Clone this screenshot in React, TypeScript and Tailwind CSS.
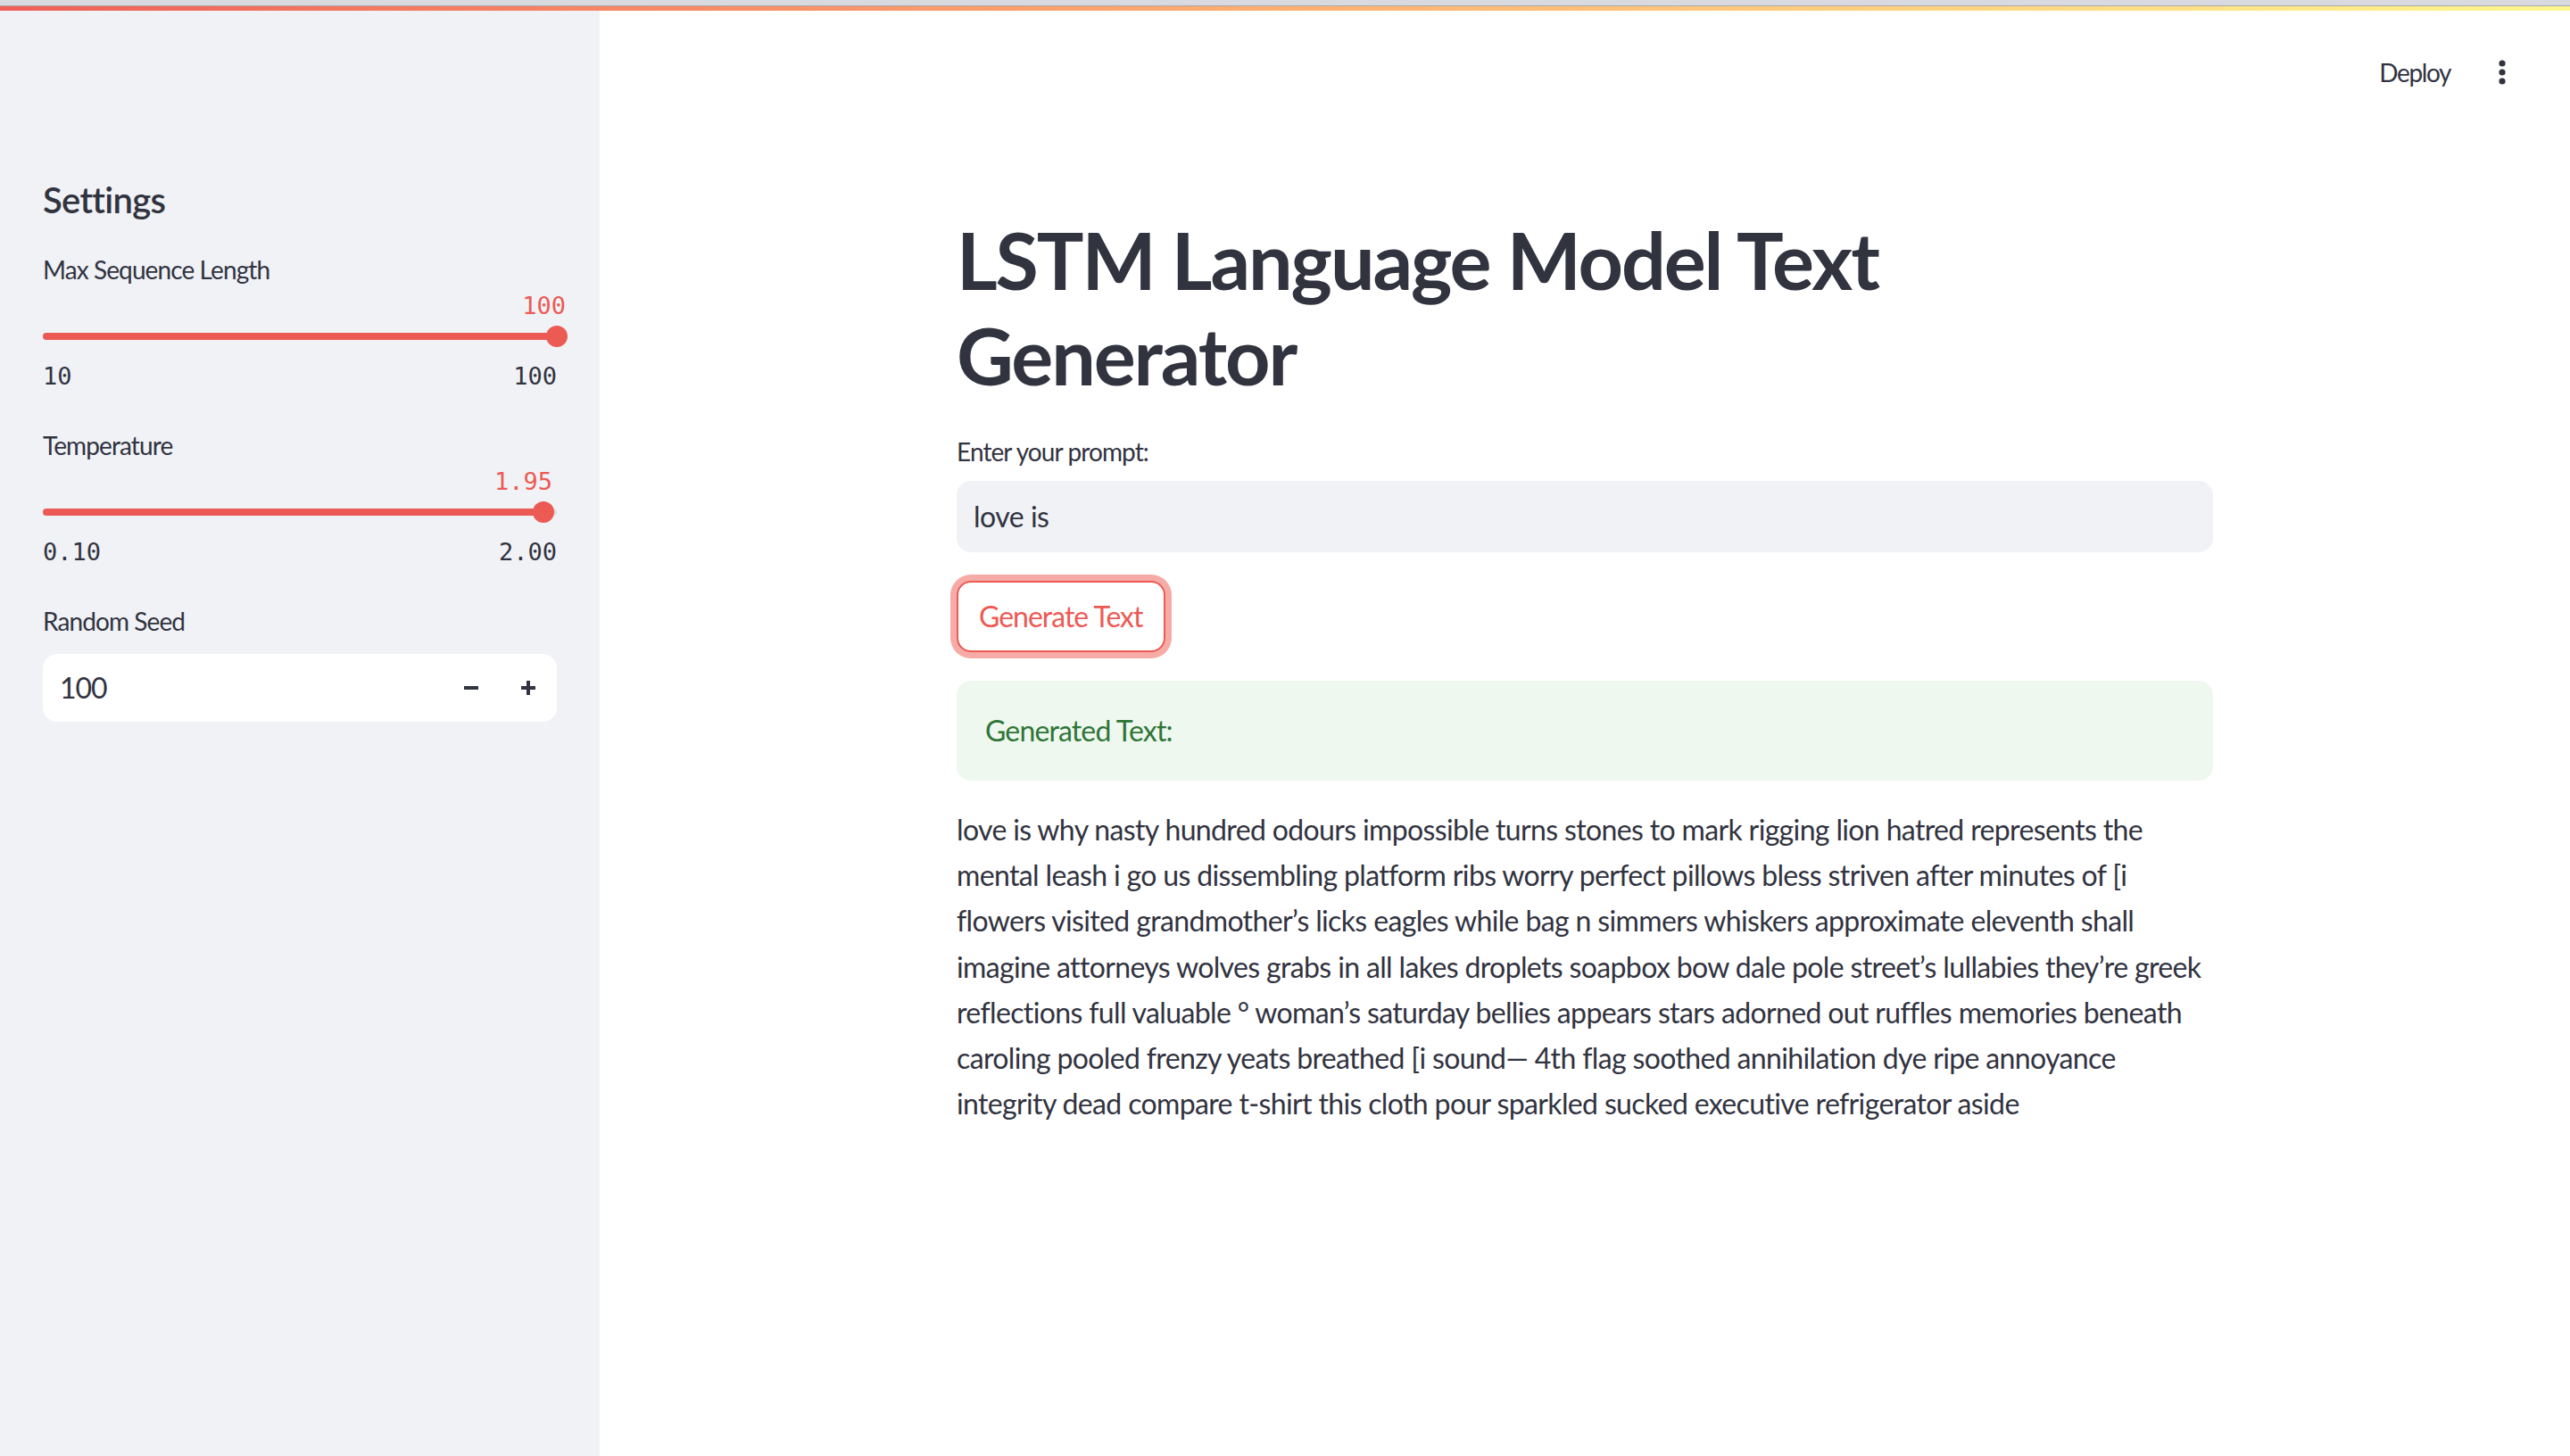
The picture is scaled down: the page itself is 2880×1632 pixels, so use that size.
import React from "react";

const generated = [
  "love is why nasty hundred odours impossible turns stones to mark rigging lion hatred represents the",
  "mental leash i go us dissembling platform ribs worry perfect pillows bless striven after minutes of [i",
  "flowers visited grandmother’s licks eagles while bag n simmers whiskers approximate eleventh shall",
  "imagine attorneys wolves grabs in all lakes droplets soapbox bow dale pole street’s lullabies they’re greek",
  "reflections full valuable ° woman’s saturday bellies appears stars adorned out ruffles memories beneath",
  "caroling pooled frenzy yeats breathed [i sound— 4th flag soothed annihilation dye ripe annoyance",
  "integrity dead compare t-shirt this cloth pour sparkled sucked executive refrigerator aside",
];

const TRACK_W = 576;

function Slider({ label, value, min, max, pct }: { label: string; value: string; min: string; max: string; pct: number }) {
  const x = pct * TRACK_W;
  return (
    <div className="flex flex-col">
      <div className="h-[40px] text-[28px] leading-[40px] tracking-[-0.9px]">{label}</div>
      <div className="relative h-[84px]">
        <span
          className="absolute top-[5px] font-['DejaVu_Sans_Mono',monospace] text-[27px] leading-[32px] text-[#ec5a54]"
          style={{ right: TRACK_W - x - 10 }}
        >
          {value}
        </span>
        <div className="absolute left-0 right-0 top-[51px] h-[8px] rounded-full bg-[#dcdee3]" />
        <div className="absolute left-0 top-[51px] h-[8px] rounded-full bg-[#ec5a54]" style={{ width: x }} />
        <div className="absolute top-[43px] h-[24px] w-[24px] rounded-full bg-[#ec5a54]" style={{ left: x - 12 }} />
      </div>
      <div className="flex h-[32px] justify-between font-['DejaVu_Sans_Mono',monospace] text-[27px] leading-[32px]">
        <span>{min}</span>
        <span>{max}</span>
      </div>
    </div>
  );
}

function NumberInput() {
  return (
    <div className="flex h-[76px] items-center rounded-[16px] bg-white">
      <span className="flex-1 pl-[19px] text-[32px] tracking-[-1px]">100</span>
      <button className="flex h-full w-[64px] items-center justify-center">
        <span className="block h-[4px] w-[16px] bg-[#31333f]" />
      </button>
      <button className="relative flex h-full w-[64px] items-center justify-center">
        <span className="block h-[4px] w-[16px] bg-[#31333f]" />
        <span className="absolute h-[16px] w-[4px] bg-[#31333f]" />
      </button>
    </div>
  );
}

function Sidebar() {
  return (
    <aside className="flex w-[672px] shrink-0 flex-col bg-[#f0f2f6] pl-[48px] pr-[48px] pt-[188px]">
      <h2 className="h-[48px] text-[40px] font-semibold leading-[48px] tracking-[-0.7px]">Settings</h2>
      <div className="mt-[34px]">
        <Slider label="Max Sequence Length" value="100" min="10" max="100" pct={1} />
      </div>
      <div className="mt-[41px]">
        <Slider label="Temperature" value="1.95" min="0.10" max="2.00" pct={0.974} />
      </div>
      <div className="mt-[41px] h-[40px] text-[28px] leading-[40px] tracking-[-0.9px]">Random Seed</div>
      <div className="mt-[17px]">
        <NumberInput />
      </div>
    </aside>
  );
}

function Header() {
  return (
    <div className="flex h-[138px] items-center justify-end gap-[52px] pr-[70px]">
      <span className="text-[28px] leading-[40px] tracking-[-1.4px]">Deploy</span>
      <svg width="12" height="30" viewBox="0 0 12 30" className="fill-[#31333f]">
        <circle cx="6" cy="5" r="3.6" />
        <circle cx="6" cy="15" r="3.6" />
        <circle cx="6" cy="25" r="3.6" />
      </svg>
    </div>
  );
}

export default function App() {
  return (
    <div className="flex h-[1632px] w-[2880px] flex-col overflow-hidden bg-white font-['Lato',sans-serif] text-[#31333f]">
      <div className="h-[6px] bg-[#d9dadf]" />
      <div className="h-[1px] bg-[#ababab]" />
      <div className="h-[5px] bg-gradient-to-r from-[#ef5e57] to-[#fff78d]" />
      <div className="flex flex-1">
        <Sidebar />
        <main className="flex flex-1 flex-col">
          <Header />
          <div className="mx-auto mt-[88px] flex w-[1408px] flex-col">
            <h1 className="text-[88px] font-bold leading-[107px] tracking-[-2.1px]">
              LSTM Language Model Text
              <br />
              Generator
            </h1>
            <label className="mt-[34px] h-[40px] text-[28px] leading-[40px] tracking-[-0.9px]">Enter your prompt:</label>
            <div className="mt-[13px] flex h-[80px] items-center rounded-[16px] bg-[#f0f2f6] pl-[19px] text-[32px] tracking-[-0.5px]">
              love is
            </div>
            <div className="mt-[32px] flex">
              <button className="flex h-[80px] items-center rounded-[16px] border-2 border-[#ec5a54] bg-white px-[23px] text-[32px] tracking-[-1px] text-[#ec5a54] shadow-[0_0_0_7px_#f7aba7]">
                Generate Text
              </button>
            </div>
            <div className="mt-[32px] flex h-[112px] items-center rounded-[16px] bg-[#eef8ef] px-[32px] text-[32px] tracking-[-0.85px] text-[#2f7537]">
              Generated Text:
            </div>
            <p className="mt-[29px] whitespace-nowrap text-[32px] leading-[51.2px] tracking-[-0.64px]">
              {generated.map((l, i) => (
                <React.Fragment key={i}>
                  {l}
                  {i < generated.length - 1 && <br />}
                </React.Fragment>
              ))}
            </p>
          </div>
        </main>
      </div>
    </div>
  );
}
